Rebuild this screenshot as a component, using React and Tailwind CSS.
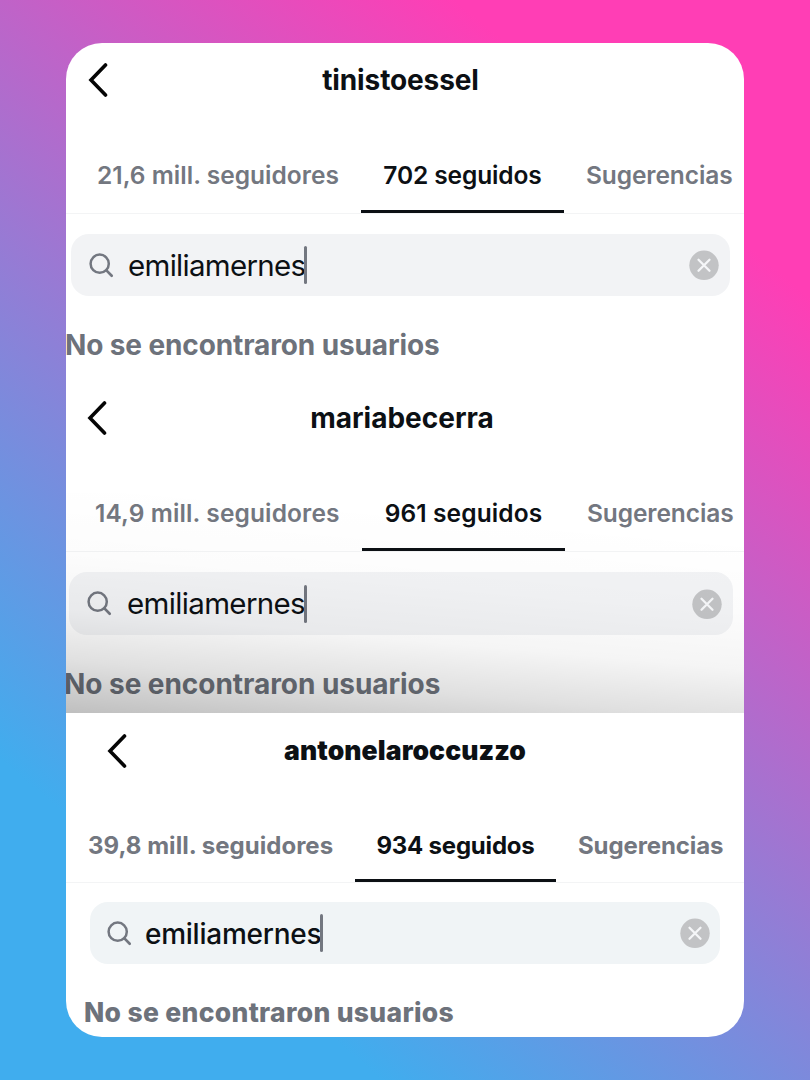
const PROFILES = [
  {
    username: 'tinistoessel',
    followers: '21,6 mill. seguidores',
    following: '702 seguidos',
    section: 'h-[338px]',
    header: 'h-[74px] pl-[22px]',
    title: 'pr-[11px] font-[650] text-[28px] tracking-[-0.12px]',
    tabs: 'h-[97px] pl-[9px] font-semibold text-[24.5px] leading-[25px]',
    firstTab: 'w-[286px] tracking-[0.03px]',
    activeTab: 'w-[203px] tracking-[-0.1px]',
    search: 'mt-[20px] ml-[5px] h-[62px] w-[659px] pl-[18px] pr-[11px] bg-[#f2f3f5]',
    query: 'text-[29.5px] tracking-[-0.7px] w-[177px] ml-[14px] pt-px',
    empty: 'mt-[31px] -ml-px font-bold text-[28px] tracking-[-0.12px]',
  },
  {
    username: 'mariabecerra',
    followers: '14,9 mill. seguidores',
    following: '961 seguidos',
    section: 'h-[332px]',
    header: 'h-[74px] pl-[21px]',
    title: 'pr-[7px] font-[650] text-[28px]',
    tabs: 'h-[97px] pl-[7px] font-semibold text-[24.5px] leading-[25px]',
    firstTab: 'w-[289px] tracking-[0.12px]',
    activeTab: 'w-[203px] tracking-[0.12px]',
    search: 'mt-[20px] ml-[3px] h-[63px] w-[664px] pl-[18px] pr-[11px] bg-[#f2f3f5]',
    query: 'text-[29.5px] tracking-[-0.65px] w-[178px] ml-[15px] pt-px',
    empty: 'mt-[31px] -ml-[2px] font-bold text-[28px] tracking-[-0.05px]',
    shaded: true,
  },
  {
    username: 'antonelaroccuzzo',
    followers: '39,8 mill. seguidores',
    following: '934 seguidos',
    section: 'h-[324px]',
    header: 'h-[75px] pl-[41px]',
    title: 'pr-[21px] font-[900] text-[26.5px] tracking-[0.1px]',
    tabs: 'h-[95px] font-bold text-[24px] leading-[23px]',
    firstTab: 'w-[289px] tracking-[0.03px]',
    activeTab: 'w-[201px] tracking-[-0.2px]',
    search: 'mt-[19px] ml-[24px] h-[62px] w-[630px] pl-[17px] pr-[10px] bg-[#f0f4f6]',
    query: 'text-[28px] font-[550] tracking-[-0.25px] w-[176px] ml-[13px] pt-px',
    empty: 'mt-[30px] ml-[18px] font-extrabold text-[26.5px] tracking-[0.32px]',
  },
];

const BackIcon = () => (
  <svg width="20" height="34" viewBox="0 0 20 34" fill="none" aria-hidden>
    <path d="M17.5 2 L3 17 L17.5 32" stroke="#050505" strokeWidth="3.6" strokeLinecap="round" strokeLinejoin="miter" />
  </svg>
);

const SearchIcon = () => (
  <svg width="25" height="25" viewBox="0 0 25 25" fill="none" aria-hidden>
    <circle cx="10.7" cy="10.7" r="9.1" stroke="#737780" strokeWidth="2.5" />
    <path d="M17.4 17.4 L22.7 22.7" stroke="#737780" strokeWidth="2.7" strokeLinecap="round" />
  </svg>
);

const ClearIcon = () => (
  <svg width="30" height="30" viewBox="0 0 30 30" fill="none" aria-hidden>
    <circle cx="15" cy="15.3" r="14.7" fill="#c2c3c5" />
    <path d="M9.5 9.8 L20.5 20.8 M20.5 9.8 L9.5 20.8" stroke="#f5f6f8" strokeWidth="2.3" strokeLinecap="round" />
  </svg>
);

const ProfileSearch = ({ profile }) => (
  <section className={`relative w-full shrink-0 ${profile.section}`}>
    <header className={`grid grid-cols-1 items-center ${profile.header}`}>
      <button type="button" className="col-start-1 row-start-1 w-5" aria-label="Volver">
        <BackIcon />
      </button>
      <h2 className={`col-start-1 row-start-1 -ml-5 justify-self-center leading-none text-[#0c1014] ${profile.title}`}>
        {profile.username}
      </h2>
    </header>

    <nav className={`flex border-b border-[#f3f4f5] text-[#737780] ${profile.tabs}`}>
      <span className={`shrink-0 pt-[46px] pl-[22px] whitespace-nowrap ${profile.firstTab}`}>
        {profile.followers}
      </span>
      <span
        className={`shrink-0 border-b-3 border-[#0c1014] pt-[46px] text-center whitespace-nowrap text-[#0c1014] ${profile.activeTab}`}
      >
        {profile.following}
      </span>
      <span className="shrink-0 pt-[46px] pl-[22px] tracking-[-0.1px] whitespace-nowrap">Sugerencias</span>
    </nav>

    <div className={`flex items-center rounded-[18px] ${profile.search}`}>
      <SearchIcon />
      <span className={`leading-none whitespace-nowrap text-[#0c1014] ${profile.query}`}>
        emiliamernes
      </span>
      <span className="-ml-px h-[38px] w-[3px] rounded-full bg-[#737780]" />
      <button type="button" className="ml-auto" aria-label="Borrar">
        <ClearIcon />
      </button>
    </div>

    <p className={`leading-[36px] whitespace-nowrap text-[#6d727b] ${profile.empty}`}>
      No se encontraron usuarios
    </p>

    {profile.shaded ? (
      <div
        className="pointer-events-none absolute inset-x-0 bottom-0 h-[220px] bg-[linear-gradient(5deg,rgba(0,0,0,0.25)_0%,rgba(0,0,0,0.12)_19%,rgba(0,0,0,0.04)_37%,rgba(0,0,0,0.012)_58%,transparent_85%)]"
        aria-hidden
      />
    ) : null}
  </section>
);

export default function App() {
  return (
    <main className="flex h-[1080px] w-[810px] bg-[linear-gradient(40deg,#40adee_18.2%,#ff3eb5_83.1%)] pt-[43px] pl-[66px] font-['Inter',sans-serif]">
      <div className="flex h-[994px] w-[678px] flex-col overflow-hidden rounded-[36px] bg-white">
        {PROFILES.map((profile) => (
          <ProfileSearch key={profile.username} profile={profile} />
        ))}
      </div>
    </main>
  );
}
